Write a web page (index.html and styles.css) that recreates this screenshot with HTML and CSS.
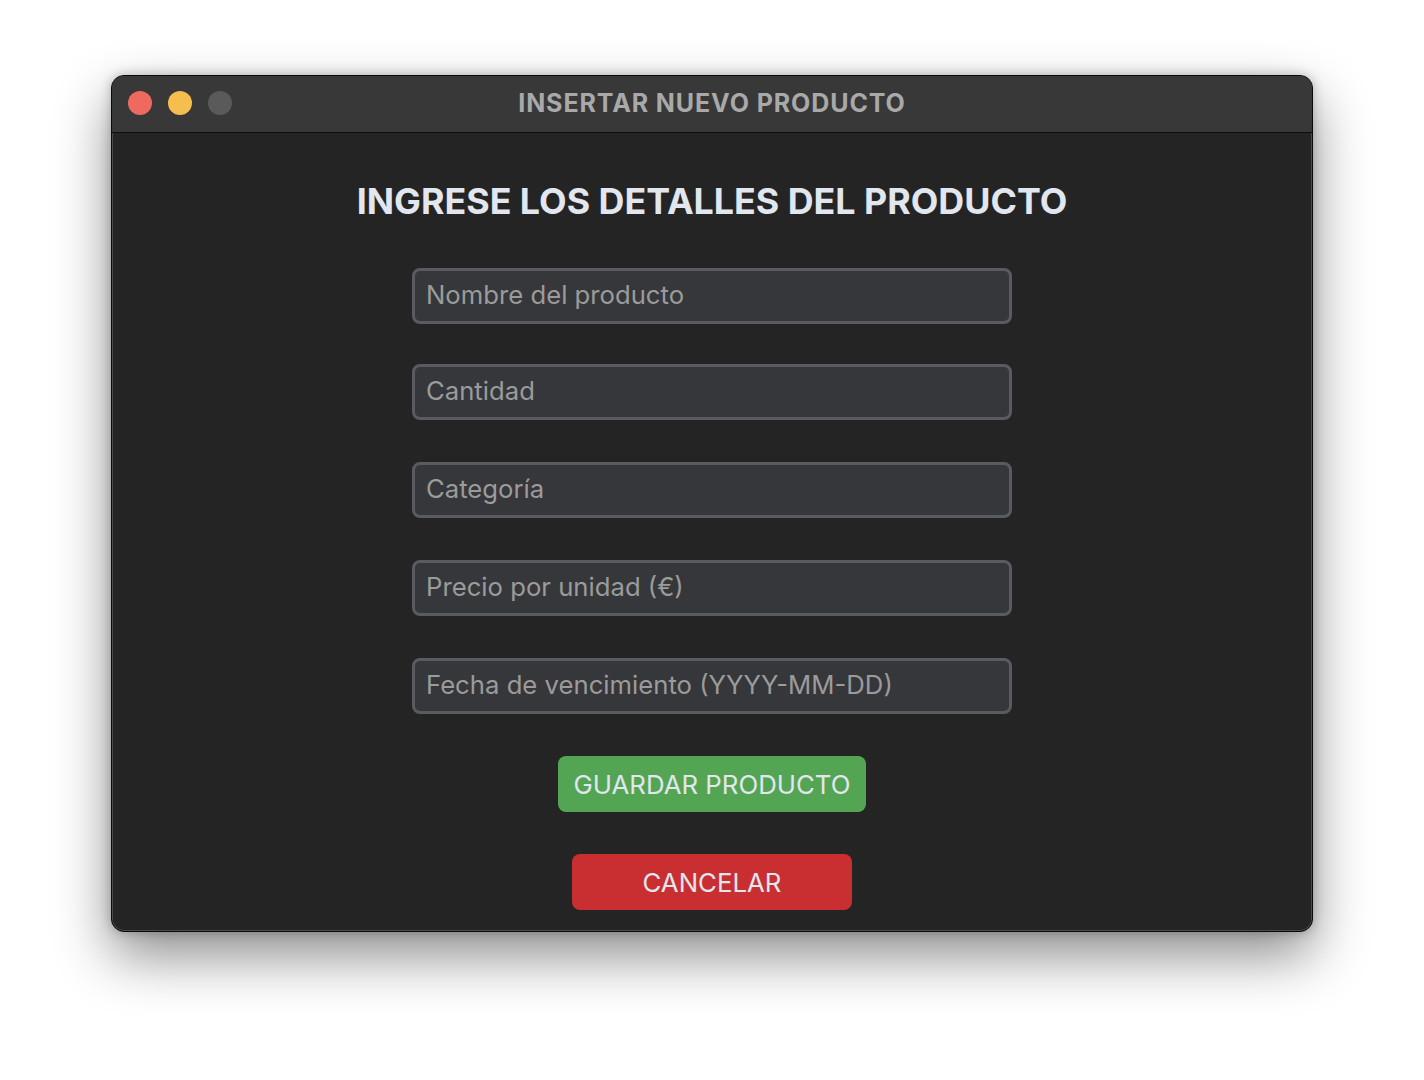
FILE: index.html
```html
<!DOCTYPE html>
<html lang="es">
<head>
<meta charset="utf-8">
<title>Insertar nuevo producto</title>
<link rel="stylesheet" href="styles.css">
</head>
<body>
<div class="window">
  <div class="titlebar">
    <div class="lights">
      <span class="light red"></span>
      <span class="light yellow"></span>
      <span class="light gray"></span>
    </div>
    <div class="title">INSERTAR NUEVO PRODUCTO</div>
  </div>
  <div class="content">
    <h1 class="heading">INGRESE LOS DETALLES DEL PRODUCTO</h1>
    <form class="form">
      <input class="field field-first" type="text" placeholder="Nombre del producto">
      <input class="field" type="text" placeholder="Cantidad">
      <input class="field" type="text" placeholder="Categoría">
      <input class="field" type="text" placeholder="Precio por unidad (€)">
      <input class="field" type="text" placeholder="Fecha de vencimiento (YYYY-MM-DD)">
      <button class="btn btn-save" type="button">GUARDAR PRODUCTO</button>
      <button class="btn btn-cancel" type="button">CANCELAR</button>
    </form>
  </div>
</div>
</body>
</html>
```

FILE: styles.css
```css
* { box-sizing: border-box; }
html, body { margin: 0; padding: 0; background: #ffffff; }
body {
  font-family: Inter, "Liberation Sans", sans-serif;
  padding-top: 75px;
  height: 1080px;
  overflow: hidden;
}
.window {
  width: 1202px;
  height: 857px;
  margin: 0 auto 0 111px;
  background: #242424;
  border: 1px solid #0a0a0a;
  border-radius: 13px;
  overflow: hidden;
  box-shadow: inset 0 0 0 1px rgba(255,255,255,0.18), 0 24px 55px rgba(0,0,0,0.45), 0 0 12px rgba(0,0,0,0.25);
  display: flex;
  flex-direction: column;
}
.titlebar {
  height: 57px;
  background: #383838;
  border-bottom: 1px solid #0e0e0e;
  display: flex;
  align-items: center;
  position: relative;
  flex-shrink: 0;
}
.lights {
  display: flex;
  gap: 16px;
  padding-left: 16px;
  position: absolute;
  left: 0;
  top: 15px;
}
.light {
  width: 24px;
  height: 24px;
  border-radius: 50%;
  display: block;
}
.light.red { background: #ee6a5f; }
.light.yellow { background: #f5be4f; }
.light.gray { background: #5a5a5a; }
.title {
  flex: 1;
  text-align: center;
  color: #a9a9a9;
  font-weight: 700;
  font-size: 25px;
  letter-spacing: 0.9px;
  padding-top: 0;
  margin-bottom: 2px;
}
.content {
  display: flex;
  flex-direction: column;
  align-items: center;
  padding-top: 47px;
}
.heading {
  margin: 0;
  color: #e1e6ef;
  font-size: 35.8px;
  font-weight: 700;
  line-height: 42px;
  letter-spacing: 0;
}
.form {
  display: flex;
  flex-direction: column;
  align-items: center;
  margin-top: 46px;
}
.field {
  width: 600px;
  height: 56px;
  background: #36373a;
  border: 3px solid #585b60;
  border-radius: 8px;
  padding: 0 11px 3px;
  font-family: Inter, "Liberation Sans", sans-serif;
  font-size: 25.7px;
  color: #ddd;
  margin-bottom: 42px;
  outline: none;
}
.field-first { margin-bottom: 40px; }
.field::placeholder { color: #9b9b9b; opacity: 1; }
.btn {
  height: 56px;
  border: none;
  border-radius: 8px;
  font-family: Inter, "Liberation Sans", sans-serif;
  font-size: 25.8px;
  color: #e1e6ef;
  padding: 0;
  margin: 0;
}
.btn-save {
  width: 308px;
  background: #53a553;
  margin-top: 0;
}
.btn-cancel {
  width: 280px;
  background: #c92f31;
  margin-top: 42px;
}
```
